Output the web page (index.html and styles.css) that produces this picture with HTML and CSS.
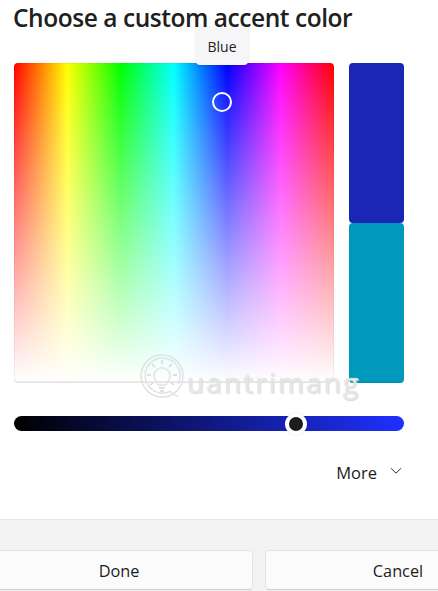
FILE: index.html
```html
<!DOCTYPE html>
<html lang="en">
<head>
<meta charset="utf-8">
<title>Choose a custom accent color</title>
<link rel="stylesheet" href="styles.css">
</head>
<body>
<main class="dialog">
  <div class="content">
    <h1 class="title">Choose a custom accent color</h1>
    <div class="tooltip">Blue</div>
    <div class="picker">
      <div class="field"><span class="ring"></span></div>
      <div class="swatches">
        <div class="swatch swatch-new"></div>
        <div class="swatch swatch-old"></div>
      </div>
    </div>
    <div class="slider"><span class="thumb"></span></div>
    <div class="more"><span>More</span>
      <svg class="chevron" width="12" height="8" viewBox="0 0 12 8" aria-hidden="true"><path d="M1 1.2 L6 6.2 L11 1.2" fill="none" stroke="#2a2a2a" stroke-width="1"/></svg>
    </div>
    <div class="watermark">
      <svg class="wm-logo" width="47" height="52" viewBox="0 0 47 52" aria-hidden="true">
        <g fill="none" stroke="#e2e2e2" stroke-width="1.5">
          <circle cx="22" cy="22" r="21"/>
          <path d="M38 30 A17.5 17.5 0 1 0 30 37.5 L38 43"/>
          <path d="M17 28 A8 8 0 1 1 27 28 L26 31 H18 Z"/>
          <path d="M19 34 H25 M20 37 H24 M22 6 V10 M12 10 L15 13 M32 10 L29 13 M7 21 H11 M33 21 H37 M10 31 L13 29 M34 31 L31 29" stroke="#d6d6d6"/>
        </g>
      </svg>
      <span class="wm-text">uantrimang</span>
    </div>
  </div>
  <footer class="footer">
    <button class="btn btn-done">Done</button>
    <button class="btn btn-cancel">Cancel</button>
  </footer>
</main>
</body>
</html>
```
FILE: styles.css
```css
* { box-sizing: border-box; }
html, body { margin: 0; height: 100%; overflow: hidden; background: #fff; }
body { font-family: "Open Sans", "Noto Sans", sans-serif; color: #1c1c1c; }
.dialog { width: 438px; height: 591px; display: flex; flex-direction: column; overflow: hidden; }
.content { position: relative; height: 519px; padding: 0 0 0 14px; }
.title { margin: 0 0 0 -1px; height: 63px; padding-top: 2px; font-size: 24.5px; line-height: 32px; font-weight: 600; letter-spacing: -0.45px; white-space: nowrap; color: #202020; }
.tooltip { position: absolute; left: 196px; top: 27px; width: 52px; height: 38px; display: flex; align-items: center; justify-content: center; background: #f6f6f9; border-radius: 4px; font-size: 14px; color: #222; box-shadow: 0 1px 3px rgba(0,0,0,.14); z-index: 2; }
.picker { display: flex; gap: 15px; }
.field { position: relative; width: 320px; height: 320px; border-radius: 4px; background: linear-gradient(to bottom, rgba(255,255,255,0), #fff), linear-gradient(to right, #f00 0%, #ff0 16.67%, #0f0 33.33%, #0ff 50%, #00f 66.67%, #f0f 83.33%, #f00 100%); box-shadow: inset 0 0 0 1px rgba(0,0,0,.03), inset 0 -2px 1px rgba(0,0,0,.08); }
.ring { position: absolute; left: 198px; top: 29px; width: 20px; height: 20px; border: 2px solid #fff; border-radius: 50%; }
.swatches { display: flex; flex-direction: column; width: 55px; }
.swatch { height: 160px; border-radius: 4px; }
.swatch-new { background: #1a27b5; }
.swatch-old { background: #0099bc; box-shadow: inset 0 -1px 0 rgba(0,0,0,.08); }
.slider { position: relative; width: 390px; height: 15px; margin-top: 33px; border-radius: 8px; background: linear-gradient(to right, #000, #1f30ff); }
.thumb { position: absolute; left: 271px; top: -3px; width: 22px; height: 22px; background: #1c1c1c; border: 4px solid #fff; border-radius: 50%; box-shadow: 0 0 0 1px rgba(0,0,0,.05); }
.more { display: flex; align-items: center; justify-content: flex-end; gap: 13px; margin-top: 29px; padding-right: 36px; height: 24px; font-size: 16.5px; }
.chevron { margin-top: -3px; }
.watermark { position: absolute; left: 140px; top: 354px; display: flex; align-items: flex-start; pointer-events: none; }
.wm-text { margin: 6px 0 0 0; font-size: 28px; line-height: 44px; font-weight: 400; color: rgba(255,255,255,.55); letter-spacing: 2.1px; text-shadow: 0 0 1px #c8c8c8, 1px 1px 1px #dedede; }
.footer { flex: 1; display: flex; gap: 12px; align-items: flex-start; padding-top: 30px; margin: 0; background: #f3f3f3; border-top: 1px solid #e6e6e6; }
.btn { flex: none; height: 40px; padding: 1px 0 0; background: #fbfbfb; border: 1px solid #e5e5e5; border-bottom-color: #cfcfcf; border-radius: 4px; font-family: inherit; font-size: 16.3px; color: #1c1c1c; }
.btn-done { width: 268px; margin-left: -15px; }
.btn-cancel { width: 266px; }
```
